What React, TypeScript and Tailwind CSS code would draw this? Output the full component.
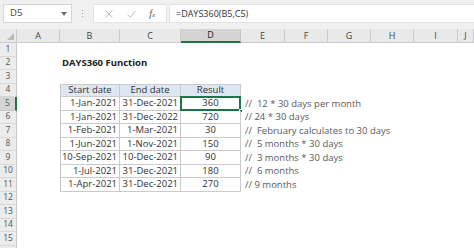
import type { ReactNode } from 'react';

const COLS = ['A', 'B', 'C', 'D', 'E', 'F', 'G', 'H', 'I', 'J'];

const ROWS: [string, string, string, string][] = [
  ['1-Jan-2021', '31-Dec-2021', '360', '//  12 * 30 days per month'],
  ['1-Jan-2021', '31-Dec-2022', '720', '// 24 * 30 days'],
  ['1-Feb-2021', '1-Mar-2021', '30', '//  February calculates to 30 days'],
  ['1-Jun-2021', '1-Nov-2021', '150', '//  5 months * 30 days'],
  ['10-Sep-2021', '10-Dec-2021', '90', '//  3 months * 30 days'],
  ['1-Jul-2021', '31-Dec-2021', '180', '//  6 months'],
  ['1-Apr-2021', '31-Dec-2021', '270', '// 9 months'],
];

const cellFont = "font-['Liberation_Sans_Narrow','Open_Sans',sans-serif]";
const uiFont = "font-['Open_Sans','Noto_Sans',sans-serif]";

function Cell({ children, className = '' }: { children?: ReactNode; className?: string }) {
  return <div className={`relative flex items-center min-w-0 ${className}`}>{children}</div>;
}

function TopBar() {
  return (
    <div className={`h-[29px] bg-[#f0f0f0] flex items-start pt-[4px] ${uiFont}`}>
      {/* name box */}
      <div className="ml-[3px] w-[69px] h-[19px] bg-white border border-[#d6d6d6] flex items-center justify-between pl-[6px] pr-[4px]">
        <span className="text-[9.5px] text-[#444]">D5</span>
        <svg width="6" height="4" viewBox="0 0 6 4">
          <path d="M0 0h6L3 4z" fill="#707070" />
        </svg>
      </div>
      {/* grip */}
      <div className="w-[21px] h-[19px] flex flex-col items-center justify-center gap-[2px]">
        <span className="w-[1px] h-[1px] bg-[#9a9a9a]" />
        <span className="w-[1px] h-[1px] bg-[#9a9a9a]" />
        <span className="w-[1px] h-[1px] bg-[#9a9a9a]" />
      </div>
      {/* buttons */}
      <div className="w-[74px] h-[19px] bg-white border border-[#e2e2e2] flex items-center justify-around px-[4px]">
        <svg width="8" height="8" viewBox="0 0 8 8">
          <path d="M0.5 0.5l7 7M7.5 0.5l-7 7" stroke="#b5b5b5" strokeWidth="0.9" />
        </svg>
        <svg width="9" height="8" viewBox="0 0 9 8">
          <path d="M0.5 4.5l2.8 2.8L8.5 0.8" stroke="#b5b5b5" strokeWidth="0.9" fill="none" />
        </svg>
        <span className="text-[10px] italic text-[#555] font-['Liberation_Serif',serif] leading-none">
          f<span className="text-[7px]">x</span>
        </span>
      </div>
      {/* formula */}
      <div className="ml-[2px] flex-1 h-[19px] bg-white border border-[#e2e2e2] border-r-0 flex items-center pl-[6px]">
        <span className="text-[9px] text-[#333]">=DAYS360(B5,C5)</span>
      </div>
    </div>
  );
}

export default function App() {
  const rowNums = Array.from({ length: 16 }, (_, i) => i + 1);

  return (
    <div className="w-[474px] h-[248px] overflow-hidden bg-white">
      <TopBar />
      <div
        className={`grid grid-cols-[17px_43px_60px_61px_60px_44px_43px_43px_43px_44px_1fr] grid-rows-[14px_repeat(16,13.5px)] ${cellFont} text-[9.5px] text-[#333]`}
      >
        {/* corner */}
        <Cell className="bg-[#e9e9e9] border-b border-r border-[#cbcbcb] justify-end items-end pr-[2px] pb-[2px]">
          <svg width="7" height="7" viewBox="0 0 7 7">
            <path d="M7 0v7H0z" fill="#b8b8b8" />
          </svg>
        </Cell>
        {COLS.map((c) =>
          c === 'D' ? (
            <Cell
              key={c}
              className={`justify-center bg-[#d4d4d4] border-r border-[#c4c4c4] border-b-2 border-b-[#217346] text-[#222] ${uiFont} text-[9px]`}
            >
              {c}
            </Cell>
          ) : (
            <Cell
              key={c}
              className={`justify-center bg-[#e9e9e9] border-r border-b border-[#cbcbcb] text-[#444] ${uiFont} text-[9px]`}
            >
              {c}
            </Cell>
          ),
        )}

        {rowNums.map((r) => {
          const data = r >= 5 && r <= 11 ? ROWS[r - 5] : null;
          const inTable = r >= 4 && r <= 11;
          const head = r === 4;
          const tb = `border-r border-b border-[#cacaca] ${head ? 'bg-[#dde6f1] border-t' : ''}`;

          return [
            <Cell
              key={`h${r}`}
              className={`justify-center ${uiFont} text-[8.5px] ${
                r === 5
                  ? 'bg-[#d4d4d4] text-[#3c6e52] border-b border-[#c9c9c9] border-r-2 border-r-[#217346]'
                  : 'bg-[#ececec] text-[#555] border-b border-[#d9d9d9] border-r border-r-[#c6c6c6]'
              }`}
            >
              {r <= 15 ? r : null}
            </Cell>,
            <Cell key={`a${r}`} />,
            <Cell
              key={`b${r}`}
              className={inTable ? `${tb} border-l ${head ? 'justify-center' : 'justify-end pr-[2px]'}` : ''}
            >
              {r === 2 && (
                <span className="absolute left-[2px] whitespace-nowrap font-bold text-[#222] text-[9.5px]">
                  DAYS360 Function
                </span>
              )}
              {head ? 'Start date' : data?.[0]}
            </Cell>,
            <Cell
              key={`c${r}`}
              className={inTable ? `${tb} ${head ? 'justify-center' : 'justify-end pr-[2px]'}` : ''}
            >
              {head ? 'End date' : data?.[1]}
            </Cell>,
            <Cell key={`d${r}`} className={inTable ? `${tb} justify-center` : ''}>
              {head ? 'Result' : data?.[2]}
              {r === 5 && (
                <>
                  <span className="absolute -left-[1px] -top-[1px] -right-[1px] -bottom-[1px] border-2 border-[#217346]" />
                  <span className="absolute -right-[3px] -bottom-[3px] w-[4px] h-[4px] bg-[#217346] border border-white" />
                </>
              )}
            </Cell>,
            <Cell key={`e${r}`} className="pl-[4px]">
              {data && (
                <span className="absolute left-[4px] whitespace-pre text-[#5a5a5a] text-[9.5px]">{data[3]}</span>
              )}
            </Cell>,
            <Cell key={`f${r}`} />,
            <Cell key={`g${r}`} />,
            <Cell key={`h2${r}`} />,
            <Cell key={`i${r}`} />,
            <Cell key={`j${r}`} />,
          ];
        })}
      </div>
    </div>
  );
}
